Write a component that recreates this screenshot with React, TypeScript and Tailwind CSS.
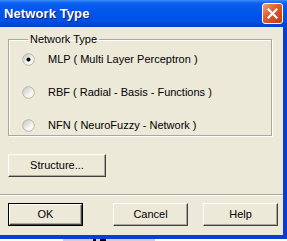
// Windows XP style "Network Type" dialog.

function Radio({ checked = false }: { checked?: boolean }) {
  return (
    <svg width="13" height="13" viewBox="0 0 13 13" className="shrink-0">
      <defs>
        <linearGradient id="rfill" x1="0" y1="0" x2="1" y2="1">
          <stop offset="0" stopColor="#c4c4bc" />
          <stop offset="0.6" stopColor="#f4f4f0" />
          <stop offset="1" stopColor="#ffffff" />
        </linearGradient>
      </defs>
      <circle cx="6.5" cy="6.5" r="5.8" fill="url(#rfill)" stroke="#b4b4ac" strokeWidth="1" />
      {checked && <circle cx="6.5" cy="6.5" r="2" fill="#000" />}
    </svg>
  );
}

function Button({ label, def = false, w }: { label: string; def?: boolean; w: string }) {
  return (
    <div className={`${w} h-[23px] ${def ? "border border-black" : ""}`}>
      <div className="h-full w-full border-t border-l border-white border-b border-r border-b-[#404040] border-r-[#404040] bg-[#ece9d8] shadow-[inset_-1px_-1px_0_#aca899] flex items-center justify-center text-[11px] text-black">
        {label}
      </div>
    </div>
  );
}

export default function App() {
  return (
    <div
      className="w-[287px] h-[241px] overflow-hidden bg-white"
      style={{ fontFamily: '"Liberation Sans", Arial, sans-serif' }}
    >
      <div className="h-[239px] flex flex-col bg-[#0a3dd6]">
        {/* ── Title bar ── */}
        <div className="h-[27px] shrink-0 flex items-center justify-between pl-[4px] pr-[4px] bg-[linear-gradient(to_bottom,#3c8cf8_0%,#0a5ff0_12%,#0055ea_45%,#0051e6_75%,#0040cf_100%)]">
          <span className="text-white font-bold text-[13px] tracking-[0.1px] [text-shadow:1px_1px_0_#0a1e6e]">
            Network Type
          </span>
          <div className="w-[21px] h-[21px] rounded-[3px] border border-white bg-[linear-gradient(135deg,#f29f80_0%,#e2562d_45%,#c63b12_100%)] flex items-center justify-center">
            <svg width="11" height="11" viewBox="0 0 11 11">
              <path d="M1.5 1.5 L9.5 9.5 M9.5 1.5 L1.5 9.5" stroke="#fff" strokeWidth="2.2" strokeLinecap="square" />
            </svg>
          </div>
        </div>

        {/* ── Client area ── */}
        <div className="flex-1 mr-[4px] mb-[4px] bg-[#ece9d8] flex flex-col text-[11px] text-black">
          <fieldset className="mt-[6px] ml-[8px] w-[264px] h-[103px] border border-[#aca899] shadow-[1px_1px_0_#fff,inset_1px_1px_0_#fff] pl-[13px]">
            <legend className="ml-[6px] px-[2px] leading-[13px]">Network Type</legend>
            <div className="flex flex-col -mt-[3px]">
              <div className="h-[33px] flex items-center gap-[13px]">
                <Radio checked />
                <span>MLP ( Multi Layer Perceptron )</span>
              </div>
              <div className="h-[33px] flex items-center gap-[13px]">
                <Radio />
                <span>RBF ( Radial - Basis - Functions )</span>
              </div>
              <div className="h-[33px] flex items-center gap-[13px]">
                <Radio />
                <span>NFN ( NeuroFuzzy - Network )</span>
              </div>
            </div>
          </fieldset>

          <div className="mt-[18px] ml-[8px]">
            <Button label="Structure..." w="w-[98px]" />
          </div>

          <div className="mt-[17px] h-[2px] border-t border-[#aca899] border-b border-b-white" />

          <div className="mt-[7px] flex pl-[8px] gap-[30px]">
            <Button label="OK" def w="w-[75px]" />
            <div className="flex gap-[15px]">
              <Button label="Cancel" w="w-[75px]" />
              <Button label="Help" w="w-[75px]" />
            </div>
          </div>
        </div>
      </div>
      <div className="h-[2px] flex">
        <div className="ml-[63px] w-[92px] bg-[#d4d0c8] flex gap-[4px] pl-[30px]">
          <div className="w-[3px] bg-black" />
          <div className="w-[6px] bg-black" />
        </div>
      </div>
    </div>
  );
}
